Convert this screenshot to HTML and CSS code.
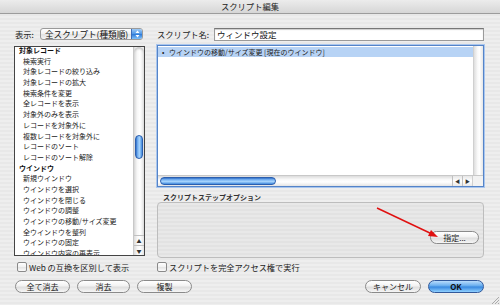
FILE: index.html
```html
<!DOCTYPE html>
<html>
<head>
    <meta charset="UTF-8">
    <title>スクリプト編集</title>
    <link rel="stylesheet" href="styles.css">
</head>
<body>
    <div class="titlebar">スクリプト編集</div>
    <div class="dialog">
        <div class="col-left">
            <div class="field-row">
                <span class="label">表示:</span>
                <div class="popup">
                    <span class="popup-text">全スクリプト(種類順)</span>
                    <span class="stepper">
                        <svg width="5" height="8" viewBox="0 0 5 8"><path d="M2.5 0.5L4.5 3H0.5Z M2.5 7.5L4.5 5H0.5Z" fill="#fff"/></svg>
                    </span>
                </div>
            </div>
            <div class="step-list">
                <ul class="steps">
                    <li class="group">対象レコード</li>
                    <li>検索実行</li>
                    <li>対象レコードの絞り込み</li>
                    <li>対象レコードの拡大</li>
                    <li>検索条件を変更</li>
                    <li>全レコードを表示</li>
                    <li>対象外のみを表示</li>
                    <li>レコードを対象外に</li>
                    <li>複数レコードを対象外に</li>
                    <li>レコードのソート</li>
                    <li>レコードのソート解除</li>
                    <li class="group">ウインドウ</li>
                    <li>新規ウインドウ</li>
                    <li>ウインドウを選択</li>
                    <li>ウインドウを閉じる</li>
                    <li>ウインドウの調整</li>
                    <li>ウインドウの移動/サイズ変更</li>
                    <li>全ウインドウを整列</li>
                    <li>ウインドウの固定</li>
                    <li>ウインドウ内容の再表示</li>
                </ul>
                <div class="vscroll">
                    <div class="vtrack"><div class="vthumb"></div></div>
                    <div class="sarrow">&#x25B2;</div>
                    <div class="sarrow">&#x25BC;</div>
                </div>
            </div>
        </div>

        <div class="col-right">
            <div class="field-row">
                <span class="label">スクリプト名:</span>
                <div class="textbox">ウィンドウ設定</div>
            </div>
            <div class="script-list">
                <div class="script-body">
                    <div class="script-lines">
                        <div class="line selected"><span class="bullet">&#x2022;</span>ウインドウの移動/サイズ変更 [現在のウインドウ]</div>
                    </div>
                    <div class="vtrack-empty"></div>
                </div>
                <div class="hscroll">
                    <div class="htrack"><div class="hthumb"></div></div>
                    <div class="harrow">&#x25C0;</div>
                    <div class="harrow">&#x25B6;</div>
                    <div class="corner"></div>
                </div>
            </div>
            <div class="options-label">スクリプトステップオプション</div>
            <div class="options-box">
                <button class="aqua-btn small">指定...</button>
            </div>
        </div>

        <label class="check check-left"><span class="box"></span>Web の互換を区別して表示</label>
        <label class="check"><span class="box"></span>スクリプトを完全アクセス権で実行</label>

        <div class="button-row">
            <div class="btn-group">
                <button class="aqua-btn w55">全て消去</button>
                <button class="aqua-btn w53">消去</button>
                <button class="aqua-btn w55">複製</button>
            </div>
            <div class="btn-group">
                <button class="aqua-btn w56">キャンセル</button>
                <button class="aqua-btn default w56">OK</button>
            </div>
        </div>
    </div>

    <!-- annotation arrow drawn over the dialog -->
    <svg class="annotation" width="500" height="305" viewBox="0 0 500 305">
        <line x1="377" y1="208" x2="432" y2="234" stroke="#e01010" stroke-width="1.4"/>
        <path d="M438 237L428 236L431 230Z" fill="#e01010"/>
    </svg>
    <svg class="grip" width="8" height="8" viewBox="0 0 8 8">
        <path d="M1 8L8 1M4 8L8 4M7 8L8 7" stroke="#999" stroke-width="0.8"/>
    </svg>
</body>
</html>
```

FILE: styles.css
```css
body {
    margin: 0;
    width: 500px;
    height: 305px;
    overflow: hidden;
    position: relative;
    font-family: "Noto Sans CJK JP", "Liberation Sans", sans-serif;
    color: #111;
    background: repeating-linear-gradient(to bottom, #eeeeee 0, #eeeeee 2px, #e8e8e8 2px, #e8e8e8 4px);
}

.titlebar {
    height: 13px;
    line-height: 13px;
    text-align: center;
    font-size: 8.3px;
    color: #222;
    background: linear-gradient(to bottom, #ececec, #d6d6d6);
    border-bottom: 1px solid #9c9c9c;
}

.dialog {
    display: grid;
    grid-template-columns: 131px 327px;
    column-gap: 12px;
    padding: 13px 0 0 14px;
}

.field-row {
    display: flex;
    align-items: center;
    height: 14px;
}

.label {
    font-size: 8.3px;
    color: #222;
    white-space: nowrap;
}

.col-left .label {
    margin-left: 1px;
    width: 25px;
}

.popup {
    display: flex;
    width: 103px;
    height: 12px;
    box-sizing: border-box;
    border: 1px solid #9a9a9a;
    border-radius: 3px;
    background: linear-gradient(to bottom, #ffffff, #f0f0f0 50%, #e2e2e2 51%, #f4f4f4);
    overflow: hidden;
}

.popup-text {
    flex-grow: 1;
    font-size: 8.6px;
    line-height: 10px;
    padding-left: 4px;
    white-space: nowrap;
    overflow: hidden;
}

.stepper {
    width: 10px;
    display: flex;
    align-items: center;
    justify-content: center;
    background: linear-gradient(to bottom, #9fcaf5, #4b95e6 50%, #2b77d6 51%, #7fc1fb);
    border-left: 1px solid #3d6db8;
}

.step-list {
    display: flex;
    margin-top: 5px;
    height: 210px;
    box-sizing: border-box;
    border: 1px solid #444;
    background: #fff;
    overflow: hidden;
}

.steps {
    list-style: none;
    margin: -2px 0 0 0;
    padding: 0;
    flex-grow: 1;
    overflow: hidden;
}

.steps li {
    font-size: 7px;
    height: 10.7px;
    line-height: 10.7px;
    padding-left: 8px;
    color: #222;
    white-space: nowrap;
}

.steps li.group {
    font-weight: bold;
    padding-left: 4px;
    color: #111;
}

.vscroll {
    width: 10px;
    display: flex;
    flex-direction: column;
    border-left: 1px solid #c8c8c8;
    background: linear-gradient(to right, #dcdcdc, #f8f8f8 35%, #ffffff 60%, #e4e4e4);
}

.vtrack {
    flex-grow: 1;
    position: relative;
    border-radius: 5px 5px 0 0;
    box-shadow: inset 0 2px 2px #c9c9c9;
}

.vthumb {
    position: absolute;
    left: 1px;
    right: 1px;
    top: 88px;
    height: 22px;
    border: 1px solid #2c5fae;
    border-radius: 5px;
    background: linear-gradient(to right, #2f6fc9, #7db6f3 30%, #a6d4fd 60%, #4189dc);
}

.sarrow {
    height: 9px;
    font-size: 5px;
    line-height: 9px;
    text-align: center;
    color: #333;
    border-top: 1px solid #c0c0c0;
}

.textbox {
    margin-left: 5px;
    width: 271px;
    height: 13px;
    box-sizing: border-box;
    border: 1px solid #9a9a9a;
    border-top-color: #777;
    background: #fff;
    box-shadow: inset 0 1px 1px #ccc;
    font-size: 8.5px;
    line-height: 11px;
    padding-left: 2px;
}

.script-list {
    display: flex;
    flex-direction: column;
    margin-top: 4px;
    height: 142px;
    box-sizing: border-box;
    border: 1px solid #5584c8;
    box-shadow: 0 0 0 1px #a9c6ee;
    background: #fff;
}

.script-body {
    flex-grow: 1;
    display: flex;
}

.script-lines {
    flex-grow: 1;
    padding-top: 1px;
}

.line {
    font-size: 7px;
    height: 10px;
    line-height: 10px;
    padding-left: 4px;
    color: #222;
    white-space: nowrap;
}

.line.selected {
    background: #b7d3f5;
}

.bullet {
    display: inline-block;
    width: 7px;
}

.vtrack-empty {
    width: 9px;
    border-left: 1px solid #d0d0d0;
    background: linear-gradient(to right, #dedede, #f9f9f9 40%, #ffffff 60%, #e6e6e6);
}

.hscroll {
    display: flex;
    height: 10px;
    border-top: 1px solid #c8c8c8;
}

.htrack {
    flex-grow: 1;
    position: relative;
    background: linear-gradient(to bottom, #dcdcdc, #f8f8f8 35%, #ffffff 60%, #e4e4e4);
}

.hthumb {
    position: absolute;
    left: 2px;
    top: 1px;
    bottom: 1px;
    width: 116px;
    box-sizing: border-box;
    border: 1px solid #2c5fae;
    border-radius: 5px;
    background: linear-gradient(to bottom, #2f6fc9, #7db6f3 30%, #a6d4fd 60%, #4189dc);
}

.harrow {
    width: 9px;
    font-size: 5px;
    line-height: 10px;
    text-align: center;
    color: #333;
    border-left: 1px solid #c0c0c0;
    background: linear-gradient(to bottom, #e6e6e6, #ffffff 50%, #e8e8e8);
}

.corner {
    width: 10px;
    background: #f2f2f2;
    border-left: 1px solid #d0d0d0;
}

.options-label {
    margin-top: 5px;
    height: 10px;
    line-height: 10px;
    font-size: 7px;
    font-weight: bold;
    color: #333;
    padding-left: 6px;
}

.options-box {
    height: 56px;
    box-sizing: border-box;
    border: 1px solid #bdbdbd;
    border-radius: 4px;
    background: repeating-linear-gradient(to bottom, #e8e8e8 0, #e8e8e8 2px, #e2e2e2 2px, #e2e2e2 4px);
    display: flex;
    justify-content: flex-end;
    align-items: flex-end;
    padding: 0 4px 13px 0;
}

.check {
    display: flex;
    align-items: center;
    margin-top: 4px;
    height: 10px;
    font-size: 8.2px;
    color: #222;
    white-space: nowrap;
}

.check-left {
    padding-left: 3px;
}

.box {
    width: 10px;
    height: 10px;
    box-sizing: border-box;
    border: 1px solid #8a8a8a;
    border-radius: 2px;
    background: linear-gradient(to bottom, #ffffff, #f1f1f1 50%, #e4e4e4 51%, #fafafa);
    margin-right: 2px;
    flex-shrink: 0;
}

.button-row {
    grid-column: 1 / 3;
    display: flex;
    justify-content: space-between;
    margin-top: 8px;
    padding-left: 1px;
}

.btn-group {
    display: flex;
    gap: 7px;
}

.aqua-btn {
    height: 13px;
    padding: 0;
    border: 1px solid #8a8a8a;
    border-radius: 7px;
    background: linear-gradient(to bottom, #ffffff, #f2f2f2 45%, #dedede 55%, #f6f6f6);
    font-family: "Noto Sans CJK JP", "Liberation Sans", sans-serif;
    font-size: 8px;
    line-height: 11px;
    color: #222;
}

.aqua-btn.small {
    width: 49px;
}

.aqua-btn.w55 { width: 55px; }
.aqua-btn.w53 { width: 53px; }
.aqua-btn.w56 { width: 56px; }

.aqua-btn.default {
    border-color: #31589a;
    background: linear-gradient(to bottom, #b9dcfb, #6fb2f0 40%, #3a8ae0 55%, #8fd0ff);
    font-weight: bold;
    color: #111;
}

.annotation {
    position: absolute;
    left: 0;
    top: 0;
    pointer-events: none;
}

.grip {
    position: absolute;
    right: 1px;
    bottom: 1px;
}
```
